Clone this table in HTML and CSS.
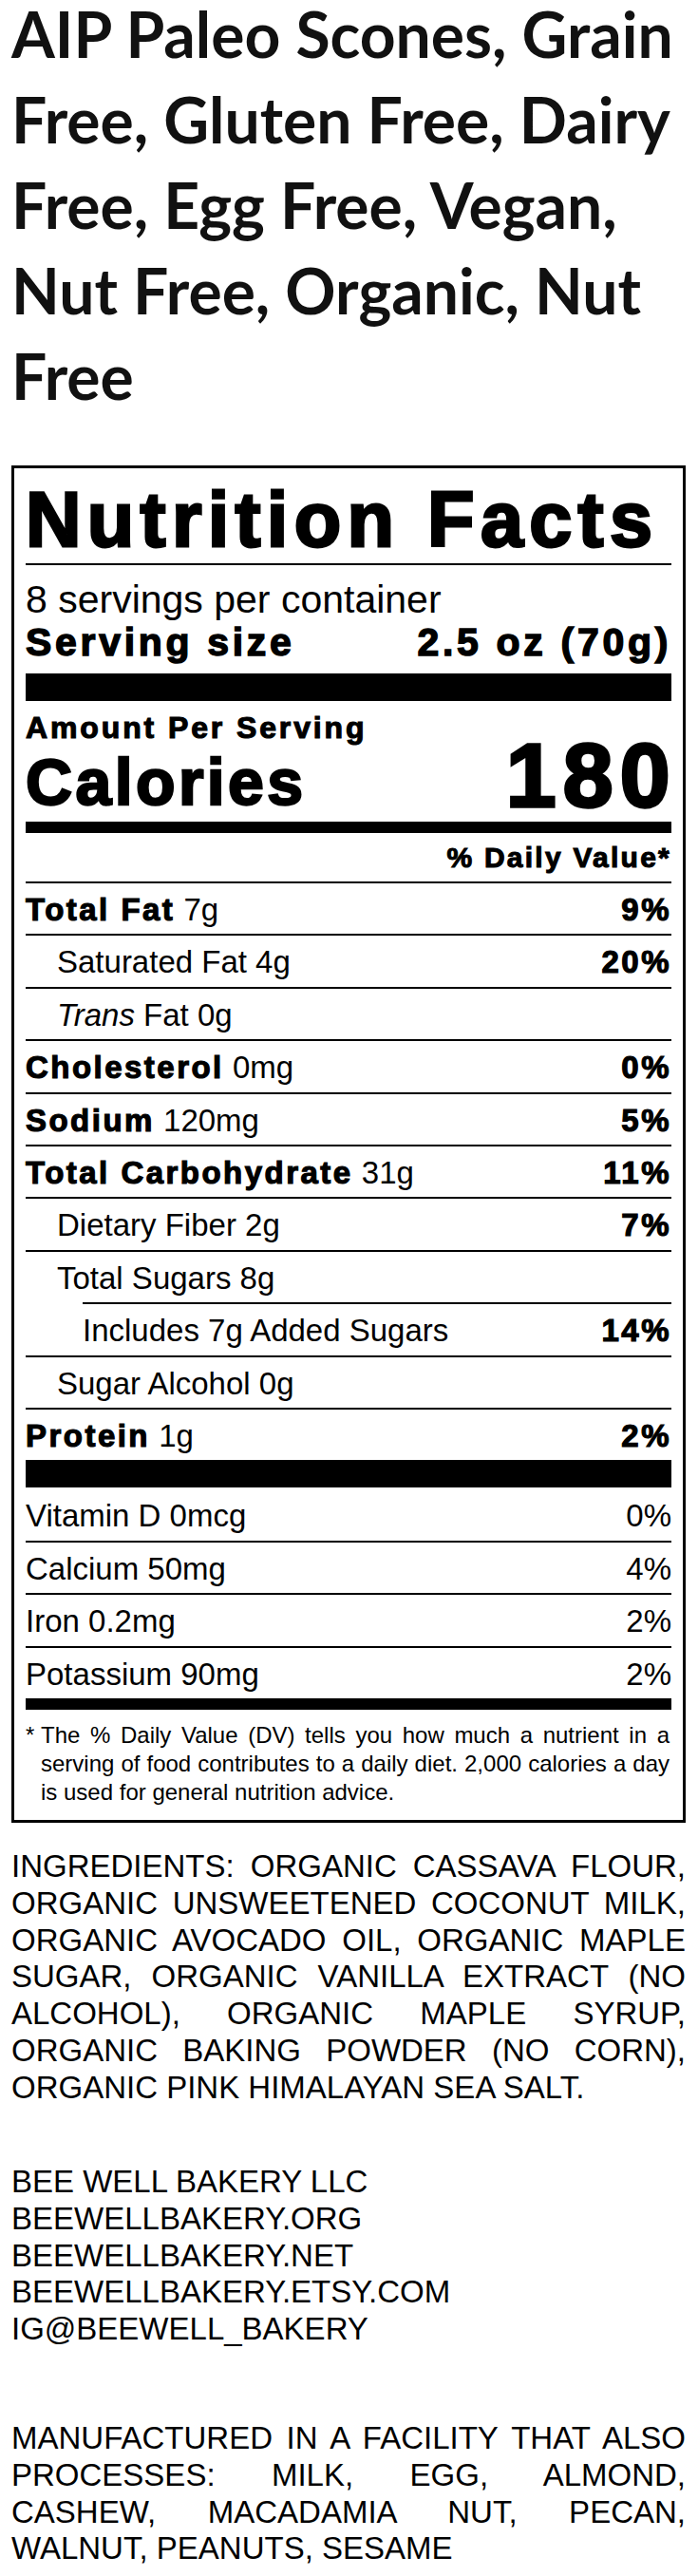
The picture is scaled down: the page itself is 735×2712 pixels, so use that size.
FILE: index.html
```html
<!DOCTYPE html>
<html lang="en">
<head>
<meta charset="utf-8">
<title>AIP Paleo Scones – Nutrition Facts</title>
<link rel="stylesheet" href="styles.css">
</head>
<body>
<div class="page">
  <h1 class="title">AIP Paleo Scones, Grain Free, Gluten Free, Dairy Free, Egg Free, Vegan, Nut Free, Organic, Nut Free</h1>

  <section class="label">
    <div class="nf-head blk">Nutrition Facts</div>
    <div class="serv">
      <div>8 servings per container</div>
      <div class="serv-size blk"><span>Serving size</span><span>2.5 oz (70g)</span></div>
    </div>
    <div class="bar-thick"></div>
    <div class="cal">
      <div class="cal-left">
        <div class="amount blk">Amount Per Serving</div>
        <div class="cal-word blk">Calories</div>
      </div>
      <div class="cal-num blk">180</div>
    </div>
    <div class="bar-mid"></div>
    <div class="dv blk">% Daily Value*</div>

    <div class="row"><span><b class="blk">Total Fat</b> 7g</span><b class="blk">9%</b></div>
    <div class="row ind1"><span>Saturated Fat 4g</span><b class="blk">20%</b></div>
    <div class="row ind1"><span><i>Trans</i> Fat 0g</span></div>
    <div class="row"><span><b class="blk">Cholesterol</b> 0mg</span><b class="blk">0%</b></div>
    <div class="row"><span><b class="blk">Sodium</b> 120mg</span><b class="blk">5%</b></div>
    <div class="row"><span><b class="blk">Total Carbohydrate</b> 31g</span><b class="blk">11%</b></div>
    <div class="row ind1"><span>Dietary Fiber 2g</span><b class="blk">7%</b></div>
    <div class="row ind1"><span>Total Sugars 8g</span></div>
    <div class="row ind2"><span>Includes 7g Added Sugars</span><b class="blk">14%</b></div>
    <div class="row ind1"><span>Sugar Alcohol 0g</span></div>
    <div class="row"><span><b class="blk">Protein</b> 1g</span><b class="blk">2%</b></div>

    <div class="bar-thick"></div>

    <div class="row no-rule"><span>Vitamin D 0mcg</span><span>0%</span></div>
    <div class="row"><span>Calcium 50mg</span><span>4%</span></div>
    <div class="row"><span>Iron 0.2mg</span><span>2%</span></div>
    <div class="row"><span>Potassium 90mg</span><span>2%</span></div>

    <div class="bar-mid"></div>

    <p class="foot"><span class="ast">*</span>The % Daily Value (DV) tells you how much a nutrient in a serving of food contributes to a daily diet. 2,000 calories a day is used for general nutrition advice.</p>
  </section>

  <p class="text ingredients">INGREDIENTS: ORGANIC CASSAVA FLOUR, ORGANIC UNSWEETENED COCONUT MILK, ORGANIC AVOCADO OIL, ORGANIC MAPLE SUGAR, ORGANIC VANILLA EXTRACT (NO ALCOHOL), ORGANIC MAPLE SYRUP, ORGANIC BAKING POWDER (NO CORN), ORGANIC PINK HIMALAYAN SEA SALT.</p>

  <div class="text company">
    <div>BEE WELL BAKERY LLC</div>
    <div>BEEWELLBAKERY.ORG</div>
    <div>BEEWELLBAKERY.NET</div>
    <div>BEEWELLBAKERY.ETSY.COM</div>
    <div>IG@BEEWELL_BAKERY</div>
  </div>

  <p class="text facility">MANUFACTURED IN A FACILITY THAT ALSO PROCESSES: MILK, EGG, ALMOND, CASHEW, MACADAMIA NUT, PECAN, WALNUT, PEANUTS, SESAME</p>
</div>
</body>
</html>
```

FILE: styles.css
```css
* {
  box-sizing: border-box;
}

html,
body {
  margin: 0;
  padding: 0;
  background: #fff;
}

body {
  font-family: "Liberation Sans", Arial, Helvetica, sans-serif;
  color: #000;
}

.page {
  padding: 0 13px 10px 12px;
}

.title {
  font-family: Lato, "Open Sans", sans-serif;
  font-weight: 700;
  font-size: 66px;
  line-height: 90px;
  margin: -9px 0 0;
  color: #111;
}

/* ---------- Nutrition label ---------- */
.label {
  margin-top: 49px;
  border: 3px solid #000;
  padding: 0 12px;
}

.blk {
  font-weight: 700;
  letter-spacing: 0.075em;
  -webkit-text-stroke: 0.035em #000;
}

.nf-head {
  font-size: 81px;
  line-height: 92px;
  padding-top: 8px;
  letter-spacing: 0.078em;
  border-bottom: 2px solid #000;
  white-space: nowrap;
}

.serv {
  padding: 14px 0 10px;
  font-size: 41px;
  line-height: 45px;
}

.serv-size {
  display: flex;
  justify-content: space-between;
  letter-spacing: 0.09em;
}

.bar-thick {
  height: 29px;
  background: #000;
}

.bar-mid {
  height: 12px;
  background: #000;
}

.cal {
  display: flex;
  justify-content: space-between;
  align-items: flex-end;
  padding-bottom: 2px;
}

.amount {
  font-size: 32px;
  line-height: 34px;
  padding-top: 11px;
  letter-spacing: 0.09em;
}

.cal-word {
  font-size: 68px;
  line-height: 80px;
  letter-spacing: 0.05em;
}

.cal-num {
  font-size: 95px;
  line-height: 94px;
  margin-right: -0.06em;
}

.dv {
  font-size: 30px;
  line-height: 36px;
  padding: 8px 0 7px;
  text-align: right;
}

.row {
  display: flex;
  justify-content: space-between;
  font-size: 33px;
  line-height: 51.4px;
  padding-top: 2px;
  border-top: 2px solid #000;
}

.row b {
  font-weight: 700;
}

.row.no-rule {
  border-top: 0;
  padding-top: 4px;
}

.ind1 {
  padding-left: 33px;
}

.ind2 {
  margin-left: 60px;
}

.foot {
  margin: 0;
  padding: 12px 2px 14px 16px;
  font-size: 24px;
  line-height: 30px;
  text-align: justify;
  text-indent: -16px;
}

.ast {
  display: inline-block;
  width: 16px;
  text-indent: 0;
}

/* ---------- Text below the label ---------- */
.text {
  margin: 0;
  font-size: 33px;
  line-height: 38.8px;
  text-align: justify;
}

.ingredients {
  margin-top: 27px;
}

.company {
  margin-top: 60.4px;
  text-align: left;
}

.facility {
  margin-top: 76px;
}
```
